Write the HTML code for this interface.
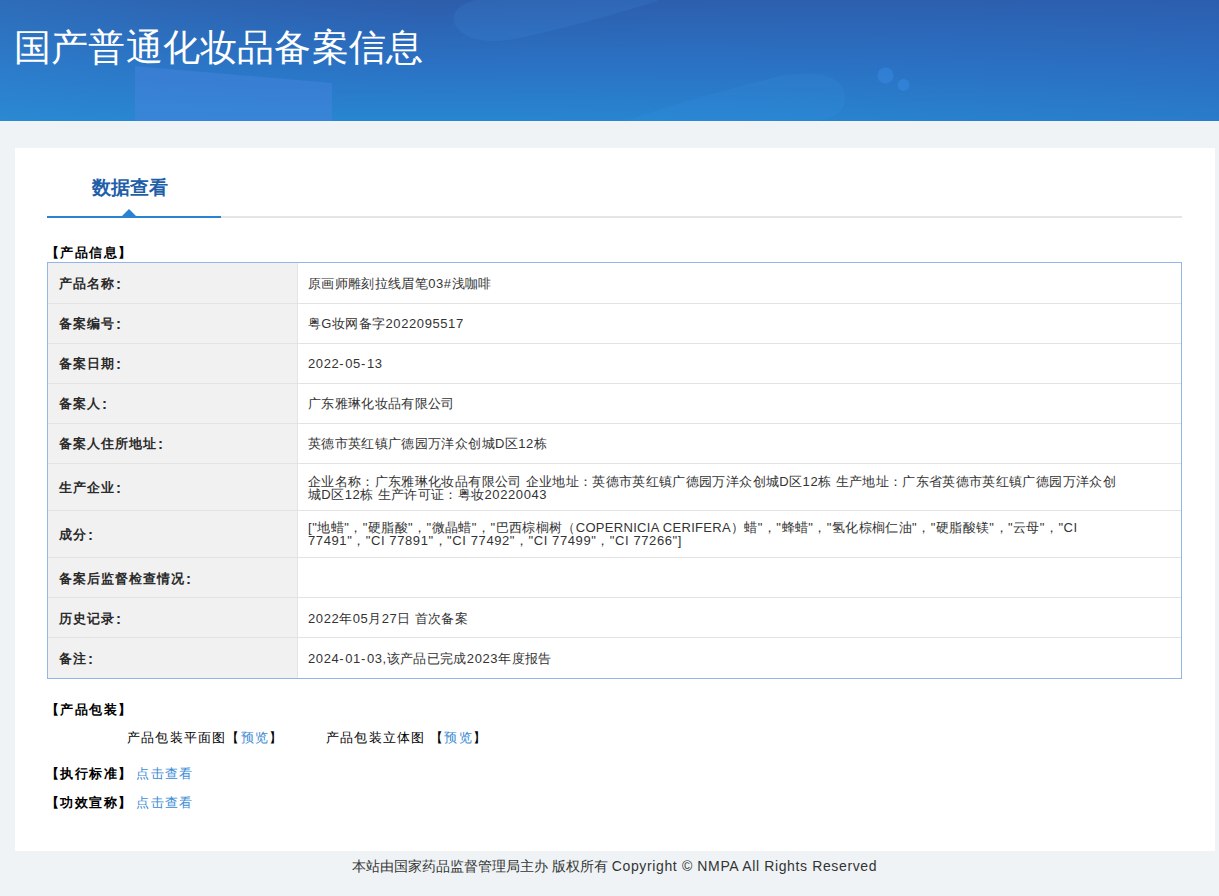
<!DOCTYPE html>
<html><head><meta charset="utf-8">
<style>
*{margin:0;padding:0;box-sizing:border-box}
html,body{width:1219px;height:896px;overflow:hidden;background:#eff3f6;font-family:"Liberation Sans",sans-serif;color:#333}
.a{position:absolute;white-space:nowrap}
#hd{position:absolute;left:0;top:0;width:1219px;height:121px;background:linear-gradient(180deg,#2c5dab 0%,#2b70c2 50%,#2886d0 100%);overflow:hidden}
#hd .h1{left:14px;top:24px;font-size:37.3px;color:#fff;line-height:46px;font-weight:500;letter-spacing:0.2px}
#panel{position:absolute;left:15px;top:148px;width:1200px;height:703px;background:#fff}
#tab{left:92px;top:176px;font-size:19px;line-height:24px;font-weight:bold;color:#1f5fa9;letter-spacing:0}
#tabline{position:absolute;left:47px;top:216px;width:1135px;height:2px;background:#e5e5e5}
#tabblue{position:absolute;left:47px;top:216px;width:174px;height:2px;background:#2a83d2}
#tri{position:absolute;left:122px;top:209px;width:0;height:0;border-left:7px solid transparent;border-right:7px solid transparent;border-bottom:7px solid #2a83d2}
.sec{font-size:13px;line-height:16px;font-weight:bold;color:#000;letter-spacing:1.4px}
#tbl{position:absolute;left:47px;top:262px;width:1135px;height:417px;border:1px solid #93b6e6;background:#fff}
#tbl .lc{position:absolute;left:0;top:0;width:250px;height:415px;background:#f1f1f1;border-right:1px solid #e3e3e3}
#tbl .hl{position:absolute;left:0;width:1133px;height:1px;background:#e3e3e3}
.k{font-size:13px;line-height:16px;font-weight:bold;color:#2a2a2a;letter-spacing:1.0px}
.k .c{margin-left:1px;font-size:15px;line-height:14px;position:relative;top:1px}
.v .h{letter-spacing:1.6px}
.v .u{letter-spacing:0.3px}
.v{font-size:13px;line-height:16px;color:#333;letter-spacing:0.35px}
.v .l{letter-spacing:0.6px}
.v2{line-height:13px}
.foot{font-size:14px;line-height:18px;color:#333}
.lk{color:#3a8ad4;font-weight:normal}
.sec .lk{margin-left:-1px;letter-spacing:1.1px}
.n{font-weight:normal;color:#000;letter-spacing:1.2px}
</style></head><body>
<div id="hd"><svg width="1219" height="121" style="position:absolute;left:0;top:0">
<defs>
<linearGradient id="g1" x1="0" y1="0" x2="0" y2="1"><stop offset="0" stop-color="#2d5dab"/><stop offset="0.5" stop-color="#2b70c2"/><stop offset="1" stop-color="#2886d0"/></linearGradient>
<linearGradient id="g2" x1="0" y1="0" x2="1" y2="0"><stop offset="0" stop-color="#3090d8" stop-opacity="0.3"/><stop offset="0.35" stop-color="#2a80d0" stop-opacity="0"/><stop offset="1" stop-color="#2b60b8" stop-opacity="0.25"/></linearGradient>
</defs>
<rect width="1219" height="121" fill="url(#g1)"/>
<rect width="1219" height="121" fill="url(#g2)"/>
<path d="M135 66 L332 83 L332 121 L135 121 Z" fill="#4a86e0" fill-opacity="0.45"/>
<path d="M475 0 L660 0 Q600 20 520 38 Q470 48 455 25 Q448 8 475 0 Z" fill="#4a9ae8" fill-opacity="0.14"/>
<path d="M625 121 Q690 98 780 76 Q840 66 845 95 Q848 115 820 121 Z" fill="#3a9ae8" fill-opacity="0.14"/>
<circle cx="885.5" cy="75.5" r="8" fill="#3a8ee8" fill-opacity="0.45"/>
<circle cx="903.5" cy="85" r="6" fill="#3a8ee8" fill-opacity="0.45"/>
</svg><div class="a h1">国产普通化妆品备案信息</div></div>
<div id="panel"></div>
<div class="a" id="tab">数据查看</div>
<div id="tabline"></div><div id="tabblue"></div><div id="tri"></div>
<div class="a sec" style="left:46px;top:245px">【产品信息】</div>
<div id="tbl">
<div class="lc"></div>
<div class="hl" style="top:40px"></div>
<div class="hl" style="top:80px"></div>
<div class="hl" style="top:120px"></div>
<div class="hl" style="top:160px"></div>
<div class="hl" style="top:200px"></div>
<div class="hl" style="top:247px"></div>
<div class="hl" style="top:294px"></div>
<div class="hl" style="top:334px"></div>
<div class="hl" style="top:374px"></div>
</div>
<div class="a k" style="left:59px;top:276px">产品名称<span class="c">:</span></div>
<div class="a k" style="left:59px;top:316px">备案编号<span class="c">:</span></div>
<div class="a k" style="left:59px;top:356px">备案日期<span class="c">:</span></div>
<div class="a k" style="left:59px;top:396px">备案人<span class="c">:</span></div>
<div class="a k" style="left:59px;top:436px">备案人住所地址<span class="c">:</span></div>
<div class="a k" style="left:59px;top:480px">生产企业<span class="c">:</span></div>
<div class="a k" style="left:59px;top:527px">成分<span class="c">:</span></div>
<div class="a k" style="left:59px;top:571px">备案后监督检查情况<span class="c">:</span></div>
<div class="a k" style="left:59px;top:611px">历史记录<span class="c">:</span></div>
<div class="a k" style="left:59px;top:651px">备注<span class="c">:</span></div>
<div class="a v" style="left:308px;top:276px">原画师雕刻拉线眉笔<span class="l">03#</span>浅咖啡</div>
<div class="a v" style="left:308px;top:316px">粤<span class="l">G</span>妆网备字<span class="l">2022095517</span></div>
<div class="a v" style="left:308px;top:356px"><span class="l">2022<span class="h">-</span>05<span class="h">-</span>13</span></div>
<div class="a v" style="left:308px;top:396px">广东雅琳化妆品有限公司</div>
<div class="a v" style="left:308px;top:436px">英德市英红镇广德园万洋众创城<span class="l">D</span>区<span class="l">12</span>栋</div>
<div class="a v v2" style="left:308px;top:475px">企业名称：广东雅琳化妆品有限公司 企业地址：英德市英红镇广德园万洋众创城<span class="l">D</span>区<span class="l">12</span>栋 生产地址：广东省英德市英红镇广德园万洋众创<br>城<span class="l">D</span>区<span class="l">12</span>栋 生产许可证：粤妆<span class="l">20220043</span></div>
<div class="a v v2" style="left:308px;top:521px"><span class="l">["</span>地蜡<span class="l">"</span>，<span class="l">"</span>硬脂酸<span class="l">"</span>，<span class="l">"</span>微晶蜡<span class="l">"</span>，<span class="l">"</span>巴西棕榈树（<span class="u">COPERNICIA CERIFERA</span>）蜡<span class="l">"</span>，<span class="l">"</span>蜂蜡<span class="l">"</span>，<span class="l">"</span>氢化棕榈仁油<span class="l">"</span>，<span class="l">"</span>硬脂酸镁<span class="l">"</span>，<span class="l">"</span>云母<span class="l">"</span>，<span class="l">"CI</span><br><span class="l">77491"</span>，<span class="l">"CI 77891"</span>，<span class="l">"CI 77492"</span>，<span class="l">"CI 77499"</span>，<span class="l">"CI 77266"]</span></div>
<div class="a v" style="left:308px;top:611px"><span class="l">2022</span>年<span class="l">05</span>月<span class="l">27</span>日 首次备案</div>
<div class="a v" style="left:308px;top:651px"><span class="l">2024<span class="h">-</span>01<span class="h">-</span>03,</span>该产品已完成<span class="l">2023</span>年度报告</div>
<div class="a sec" style="left:46px;top:702px">【产品包装】</div>
<div class="a v n" style="left:127px;top:730px">产品包装平面图【<span class="lk">预览</span>】</div>
<div class="a v n" style="left:326px;top:730px">产品包装立体图 【<span class="lk">预览</span>】</div>
<div class="a sec" style="left:46px;top:766px">【执行标准】 <span class="lk">点击查看</span></div>
<div class="a sec" style="left:46px;top:795px">【功效宣称】 <span class="lk">点击查看</span></div>
<div class="a foot" style="left:352px;top:857px">本站由国家药品监督管理局主办 版权所有 <span style="letter-spacing:0.63px">Copyright © NMPA All Rights Reserved</span></div>
</body></html>
